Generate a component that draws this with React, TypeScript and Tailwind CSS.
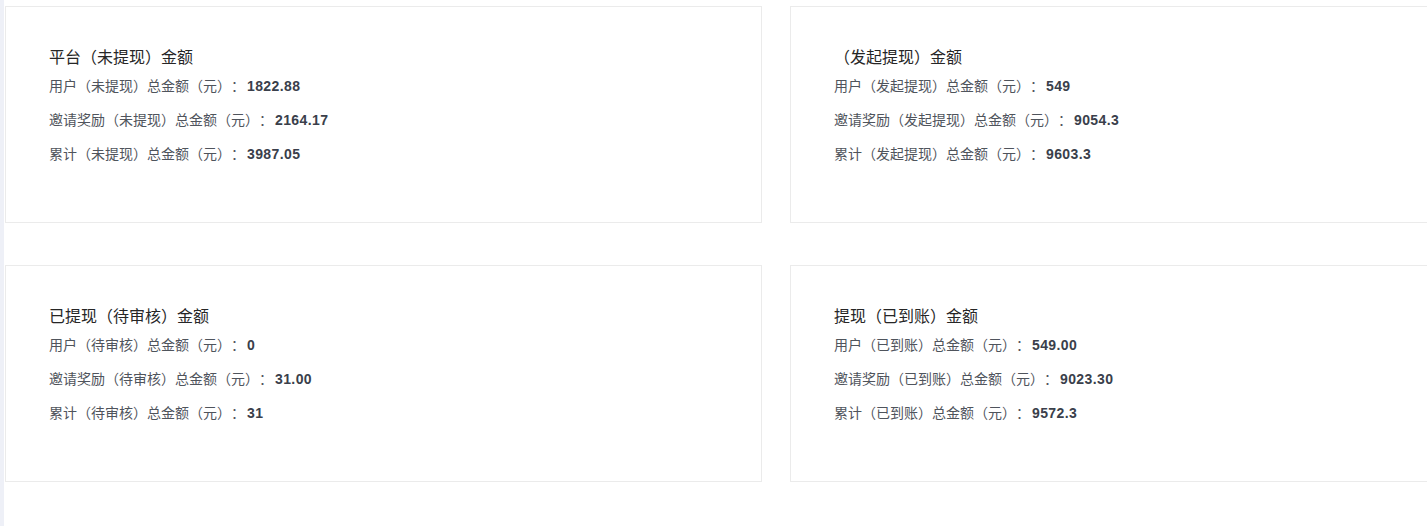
import React from 'react';

interface StatLine {
    label: string;
    value: string;
}

interface StatCard {
    title: string;
    lines: StatLine[];
}

const cards: StatCard[] = [
    {
        title: '平台（未提现）金额',
        lines: [
            { label: '用户（未提现）总金额（元）', value: '1822.88' },
            { label: '邀请奖励（未提现）总金额（元）', value: '2164.17' },
            { label: '累计（未提现）总金额（元）', value: '3987.05' },
        ],
    },
    {
        title: '（发起提现）金额',
        lines: [
            { label: '用户（发起提现）总金额（元）', value: '549' },
            { label: '邀请奖励（发起提现）总金额（元）', value: '9054.3' },
            { label: '累计（发起提现）总金额（元）', value: '9603.3' },
        ],
    },
    {
        title: '已提现（待审核）金额',
        lines: [
            { label: '用户（待审核）总金额（元）', value: '0' },
            { label: '邀请奖励（待审核）总金额（元）', value: '31.00' },
            { label: '累计（待审核）总金额（元）', value: '31' },
        ],
    },
    {
        title: '提现（已到账）金额',
        lines: [
            { label: '用户（已到账）总金额（元）', value: '549.00' },
            { label: '邀请奖励（已到账）总金额（元）', value: '9023.30' },
            { label: '累计（已到账）总金额（元）', value: '9572.3' },
        ],
    },
];

const Card: React.FC<{ card: StatCard }> = ({ card }) => {
    return (
        <div className="h-[217px] border border-[#ebebeb] bg-white pt-[40px] px-[43px]">
            <div className="text-[16px] leading-[22px] text-[#262626]">{card.title}</div>
            {card.lines.map((line) => (
                <div key={line.label} className="text-[14px] leading-[34px] text-[#4f545c] whitespace-nowrap">
                    {line.label}
                    <span className="ml-[7px] mr-[2px]">：</span>
                    <span className="font-bold tracking-[0.4px] text-[#3a3f4b]">{line.value}</span>
                </div>
            ))}
        </div>
    );
};

export default function App() {
    return (
        <div
            className="flex w-[1427px] h-[526px] overflow-hidden bg-white"
            style={{ fontFamily: '"Liberation Sans", "Noto Sans CJK SC", sans-serif' }}
        >
            {/* sidebar edge */}
            <div className="w-[4px] shrink-0 bg-[#eef0f7]" />
            <div className="pl-px pt-[6px] shrink-0">
                <div className="grid grid-cols-[757px_757px] gap-x-[28px] gap-y-[42px]">
                    {cards.map((card) => (
                        <Card key={card.title} card={card} />
                    ))}
                </div>
            </div>
        </div>
    );
}
